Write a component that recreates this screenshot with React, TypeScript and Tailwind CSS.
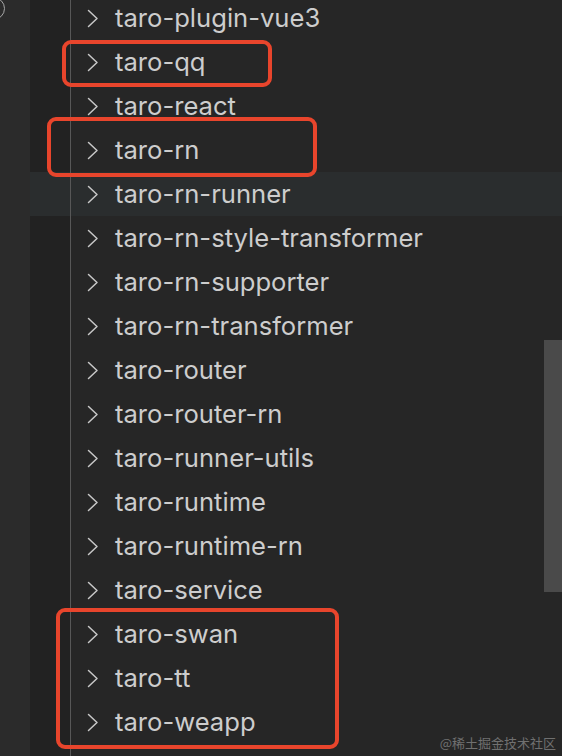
const items = [
  'taro-plugin-vue3',
  'taro-qq',
  'taro-react',
  'taro-rn',
  'taro-rn-runner',
  'taro-rn-style-transformer',
  'taro-rn-supporter',
  'taro-rn-transformer',
  'taro-router',
  'taro-router-rn',
  'taro-runner-utils',
  'taro-runtime',
  'taro-runtime-rn',
  'taro-service',
  'taro-swan',
  'taro-tt',
  'taro-weapp',
  '',
]

const HOVERED = 'taro-rn-runner'

function Chevron() {
  return (
    <svg width="12" height="19" viewBox="0 0 12 19" fill="none" className="shrink-0">
      <polyline points="1.5,1.5 10,9.5 1.5,17.5" stroke="#c8c8c8" strokeWidth="1.5" strokeLinecap="round" strokeLinejoin="round" />
    </svg>
  )
}

function Row({ name }: { name: string }) {
  const hovered = name === HOVERED
  return (
    <div className={`flex h-[44px] items-stretch ${hovered ? 'bg-[#2a2d2e]' : ''}`}>
      <div className={`w-[40px] shrink-0 ${hovered ? '' : 'bg-[#222222]'}`} />
      <div className="w-px shrink-0 bg-[#575757]" />
      {name && (
        <div className="flex items-center pl-[16px]">
          <Chevron />
          <span className="ml-[16px] text-[25.6px] leading-[44px] text-[#cdcdcd] whitespace-nowrap">{name}</span>
        </div>
      )}
    </div>
  )
}

export default function App() {
  return (
    <div
      className="relative flex h-[756px] w-[562px] overflow-hidden bg-[#262626]"
      style={{ fontFamily: 'Inter, "Noto Sans", sans-serif' }}
    >
      <div className="relative w-[30px] shrink-0 bg-[#2b2b2b]">
        <div className="absolute left-[-18px] top-[-3px] h-[23px] w-[23px] rounded-full border-[1.5px] border-[#a8a8a8]" />
      </div>
      <div className="flex-1">
        <div className="mt-[-4px] flex flex-col">
          {items.map((name, i) => (
            <Row key={i} name={name} />
          ))}
        </div>
      </div>

      {/* scrollbar thumb */}
      <div className="absolute left-[544px] top-[340px] h-[252px] w-[18px] bg-[#4a4a4a]" />

      {/* annotation boxes */}
      <div className="absolute left-[62px] top-[40px] h-[47px] w-[210px] rounded-[9px] border-[4px] border-[#e8452c]" />
      <div className="absolute left-[47px] top-[117px] h-[60px] w-[270px] rounded-[9px] border-[4px] border-[#e8452c]" />
      <div className="absolute left-[56px] top-[608px] h-[141px] w-[283px] rounded-[9px] border-[4px] border-[#e8452c]" />

      <div
        className="absolute right-[6px] top-[736px] text-[13px] leading-[14px] text-[#707070]"
        style={{ fontFamily: '"Noto Sans CJK SC", "Noto Sans", sans-serif' }}
      >
        @稀土掘金技术社区
      </div>
    </div>
  )
}
